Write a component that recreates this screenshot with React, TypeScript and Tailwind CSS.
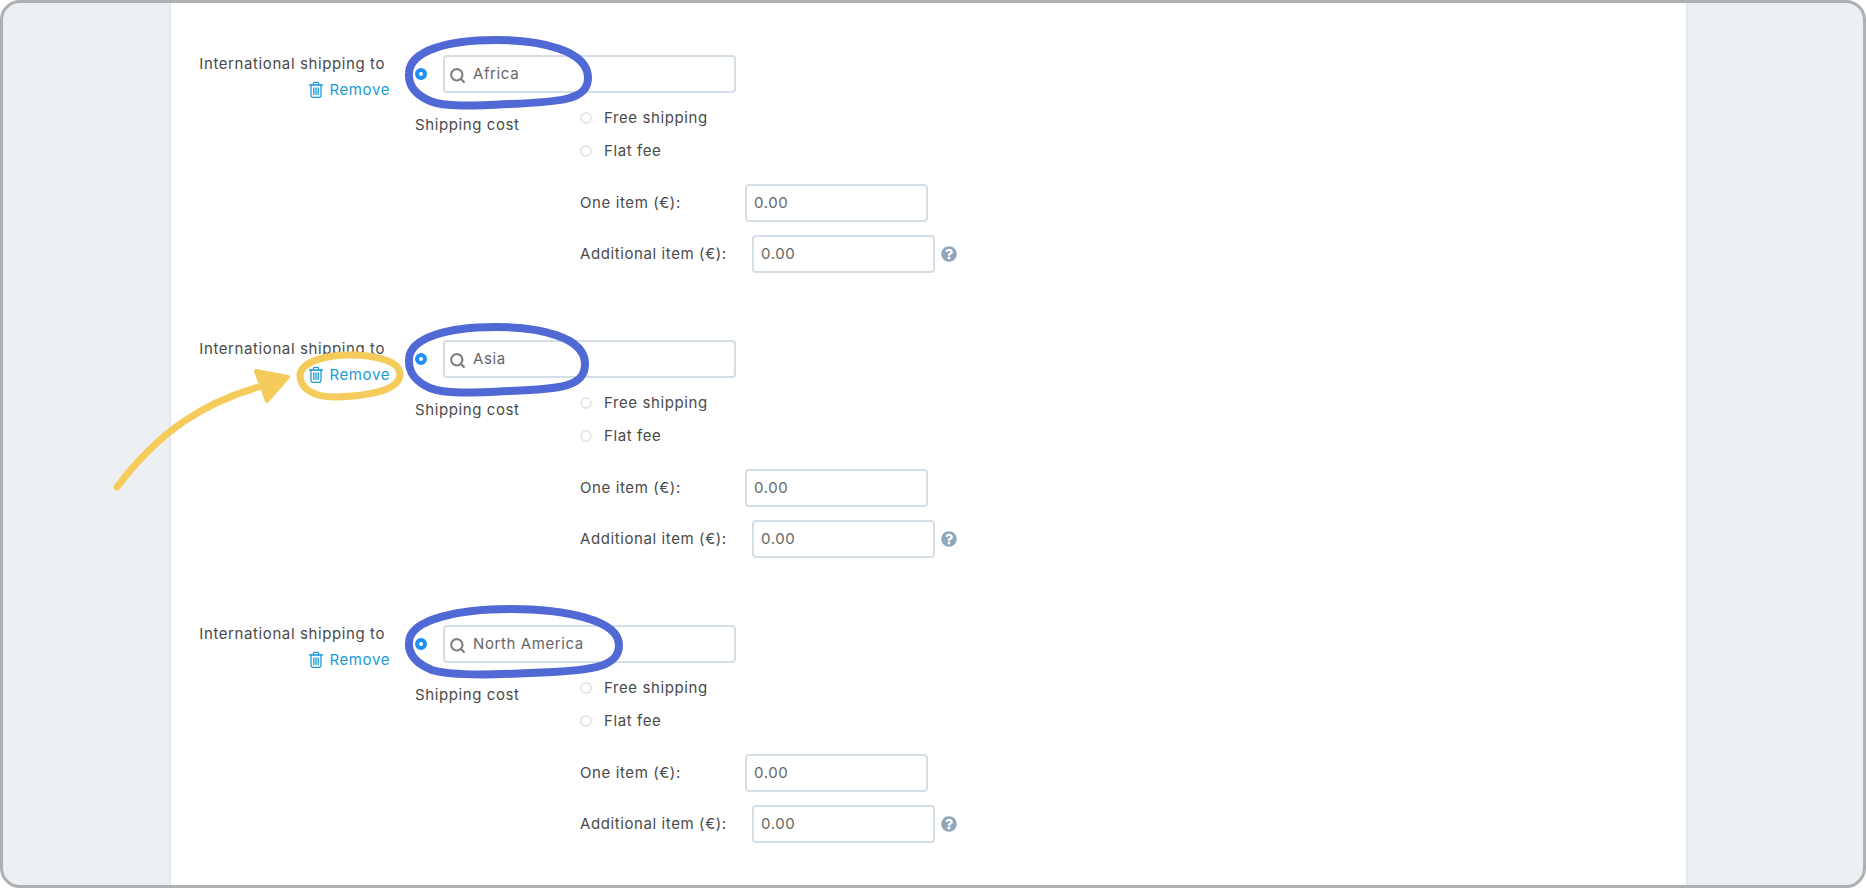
import React from 'react';
import { Search } from 'lucide-react';
import { FaQuestionCircle } from 'react-icons/fa';

const font = "font-['Inter','Liberation_Sans',sans-serif]";

const TrashIcon = () => (
  <svg width="16" height="18" viewBox="0 0 16 18" fill="none" stroke="#1a9bd7" strokeWidth="1.3" strokeLinecap="round" strokeLinejoin="round">
    <path d="M1.5 4h13" />
    <path d="M5.5 4V2.2c0-.5.4-.9.9-.9h3.2c.5 0 .9.4.9.9V4" />
    <path d="M3 4v10.6c0 1 .7 1.7 1.7 1.7h6.6c1 0 1.7-.7 1.7-1.7V4" />
    <path d="M5.8 7v6.6M8 7v6.6M10.2 7v6.6" />
  </svg>
);

const Radio = ({ checked = false }: { checked?: boolean }) =>
  checked ? (
    <span className="block w-[12px] h-[12px] mt-[-1px] rounded-full border-[4px] border-[#1e90f5] bg-white shrink-0" />
  ) : (
    <span className="block w-[12px] h-[12px] mt-[-1px] rounded-full border-2 border-[#e4e7e9] bg-white shrink-0" />
  );

const MoneyInput = () => (
  <div className="w-[183px] h-[38px] border-2 border-[#d5dde6] rounded-[4px] bg-white flex items-center pl-[7px] text-[#666]">
    0.00
  </div>
);

// One "International shipping to" block
const ShippingBlock = ({ region }: { region: string }) => (
  <div className="flex h-[285px] pt-[52px] text-[15px] tracking-[0.6px] text-[#4a4a4a]">
    <div className="w-[219px] flex flex-col items-end shrink-0">
      <div className="pr-[5px] leading-[18px]">International shipping to</div>
      <div className="flex items-center gap-[5px] mt-[8px] text-[#1a9bd7] leading-[18px]">
        <TrashIcon />
        <span>Remove</span>
      </div>
    </div>
    <div className="ml-[25px] flex-1">
      <div className="flex items-center">
        <Radio checked />
        <div className="ml-[16px] w-[293px] h-[38px] border-2 border-[#d5dde6] rounded-[4px] flex items-center pl-[4px] gap-[7px] text-[#666]">
          <Search size={17} strokeWidth={3} className="text-[#808080] mt-[2px]" />
          <span>{region}</span>
        </div>
      </div>
      <div className="flex">
        <div className="w-[165px] pt-[23px] leading-[18px]">Shipping cost</div>
        <div>
          <div className="flex items-center h-[18px] mt-[16px]">
            <Radio />
            <span className="ml-[12px]">Free shipping</span>
          </div>
          <div className="flex items-center h-[18px] mt-[15px]">
            <Radio />
            <span className="ml-[12px]">Flat fee</span>
          </div>
          <div className="flex items-center mt-[24px]">
            <span className="w-[165px]">One item (€):</span>
            <MoneyInput />
          </div>
          <div className="flex items-center mt-[13px]">
            <span className="w-[172px]">Additional item (€):</span>
            <MoneyInput />
            <FaQuestionCircle size={16} className="ml-[6px] text-[#8fa6bc]" />
          </div>
        </div>
      </div>
    </div>
  </div>
);

// Hand-drawn markup on top of the screenshot
const Annotations = () => (
  <svg className="absolute left-0 top-0 pointer-events-none" width="1866" height="888" viewBox="0 0 1866 888" fill="none" strokeLinecap="round" strokeLinejoin="round">
    <g stroke="#5069d4" strokeWidth="8">
      <path d="M409 73C410 50 450 40 495 40C540 40 588 50 588 78C588 100 560 102 510 104C470 106 445 107 430 101C416 95 408 86 409 73Z" />
      <path d="M409 359C410 337 450 327 495 327C540 327 585 337 585 364C585 387 560 389 510 391C470 393 445 394 430 388C416 382 408 372 409 359Z" />
      <path d="M409 642C410 619 460 609 510 609C565 609 619 620 619 645C619 668 590 671 530 673C490 675 450 676 432 670C417 664 408 655 409 642Z" />
    </g>
    <path d="M300 375C301 362 325 355 350 355C378 355 400 362 400 374C400 390 370 396 335 397C312 397 300 388 300 375Z" stroke="#f5cb5c" strokeWidth="7" />
    <path d="M117 487C160 430 205 402 262 386" stroke="#f5cb5c" strokeWidth="7" />
    <path d="M288 377L256 371L267 401Z" fill="#f5cb5c" stroke="#f5cb5c" strokeWidth="4" />
  </svg>
);

export default function App() {
  return (
    <div className={`relative w-[1866px] h-[888px] overflow-hidden bg-white ${font}`}>
      <div className="w-full h-full border-[3px] border-[#aeb1b3] rounded-[20px] bg-[#ecf0f3] overflow-hidden">
        <div className="ml-[168px] w-[1515px] h-full bg-white shadow-[0_0_3px_rgba(0,0,0,0.12)] flex flex-col">
          <ShippingBlock region="Africa" />
          <ShippingBlock region="Asia" />
          <ShippingBlock region="North America" />
        </div>
      </div>
      <Annotations />
    </div>
  );
}
